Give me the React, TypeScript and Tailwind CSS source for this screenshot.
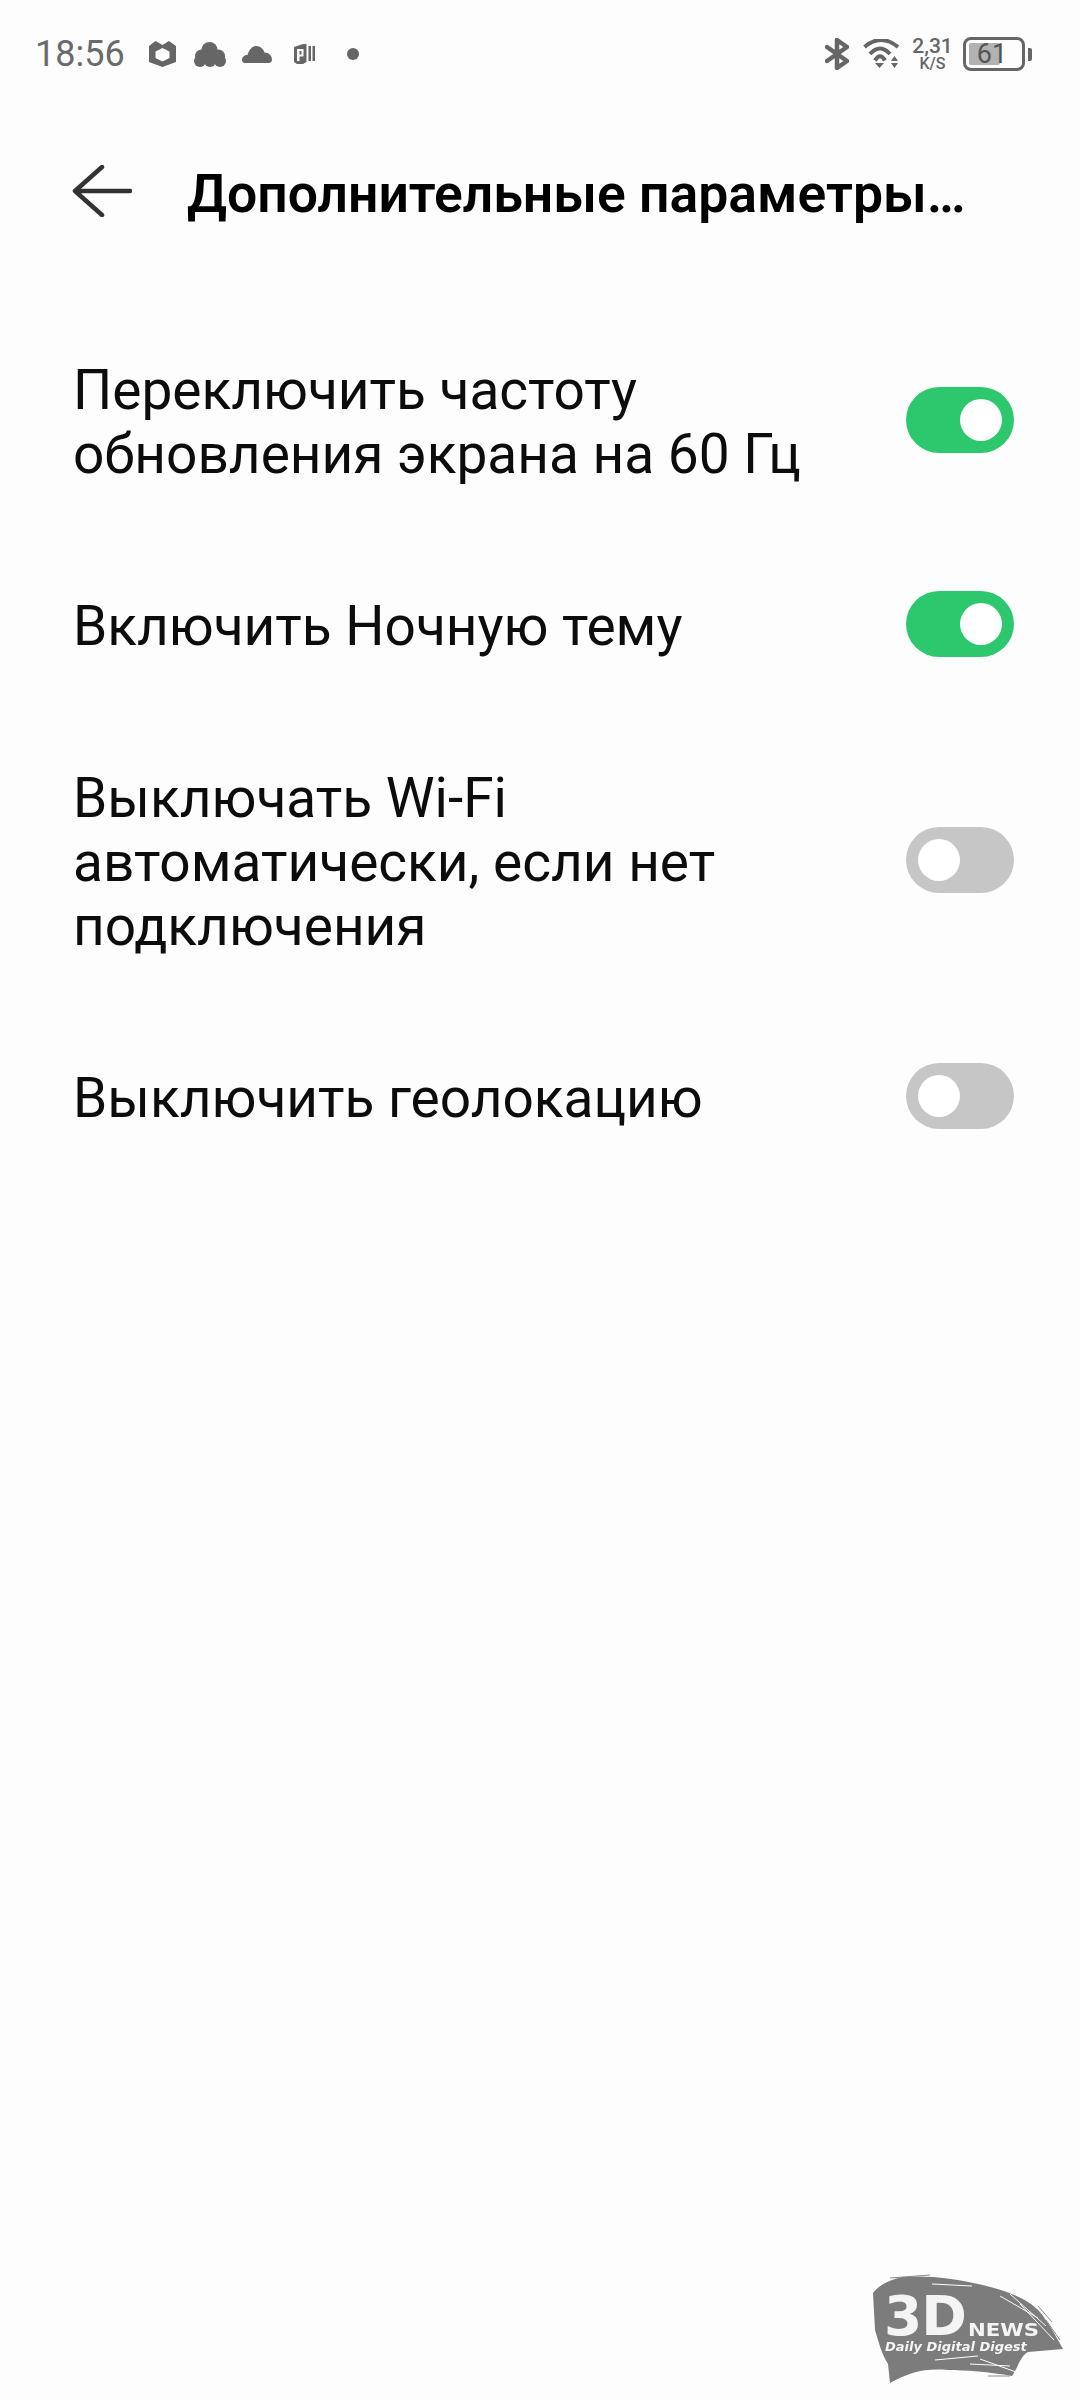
const font = { fontFamily: "Roboto, sans-serif" }

function Toggle({ on }: { on: boolean }) {
    return (
        <div className={`flex h-[66px] w-[108px] shrink-0 items-center rounded-full px-[12px] ${on ? "justify-end bg-[#2dc76d]" : "justify-start bg-[#c6c6c6]"}`}>
            <div className="h-[42px] w-[42px] rounded-full bg-white" />
        </div>
    )
}

function Row({ lines, on }: { lines: string[]; on: boolean }) {
    return (
        <div className="flex items-center justify-between">
            <div className="mt-[2px] -mb-[2px] text-[55px] leading-[64px] text-[#0c0c0c]">
                {lines.map((line) => <div key={line} className="whitespace-nowrap">{line}</div>)}
            </div>
            <Toggle on={on} />
        </div>
    )
}

function LeftIcons() {
    return (
        <div className="ml-[24px] flex items-center">
            <svg width="27" height="26" viewBox="0 0 27 26" className="fill-[#666]">
                <path fillRule="evenodd" d="M6.500 0 L13.500 4 L20 0 L27 5 V21 L13.500 26 L0 21 V5 Z M13.500 7 L6.500 10.500 V17 L13.500 20.500 L20.500 17 V10.500 Z" />
            </svg>
            <svg width="32" height="25" viewBox="0 0 32 25" className="ml-[18px] fill-[#666]">
                <circle cx="15.500" cy="8" r="8" />
                <circle cx="7.500" cy="14" r="6.500" />
                <circle cx="24.500" cy="14" r="6.500" />
                <circle cx="6" cy="19" r="6" />
                <circle cx="16" cy="19" r="6" />
                <circle cx="26" cy="19" r="6" />
            </svg>
            <svg width="30" height="17" viewBox="0 0 30 17" className="ml-[16px] fill-[#666]">
                <path d="M14 0 C18.500 0 21.500 3 22.500 6.500 C27 6.500 30 10 30 13.500 C30 16 28.500 17 26.500 17 H3 C1 17 0 15.500 0 14 C0 11 2.500 9 5.500 9 C7 4 10 0 14 0 Z" />
            </svg>
            <svg width="21" height="20" viewBox="0 0 21 20" className="ml-[22px] fill-[#666]">
                <path fillRule="evenodd" d="M0 3 L9 0 H12.500 V18 L9 20 H3 L0 18 Z M3 5 V17 H5.500 V12.500 H9.500 V5 Z M5.500 7 H7.500 V10.500 H5.500 Z" />
                <rect x="14.500" y="2" width="2.500" height="15" />
                <rect x="18.500" y="2" width="2.500" height="15" />
            </svg>
            <div className="ml-[32px] h-[12px] w-[12px] rounded-full bg-[#666]" />
        </div>
    )
}

function RightIcons() {
    return (
        <div className="flex items-center">
            <svg width="24" height="32" viewBox="0 0 24 32" fill="none" stroke="#666" strokeWidth="4.500" strokeLinecap="round" strokeLinejoin="round">
                <path d="M2 9 L22 23 L12 30 V2 L22 9 L2 23" />
            </svg>
            <svg width="36" height="30" viewBox="0 0 36 30" className="ml-[14px]" fill="none" stroke="#666" strokeWidth="4">
                <path d="M1.500 8 Q18 -6 35 8" />
                <path d="M7 15 Q17 4 27 15" />
                <path d="M12 21.500 Q17 13 22 21.500" />
                <path d="M12 24 H21 L16.500 29 Z M31.500 17 L35 22 H28 Z M28 24 H35 L31.500 29 Z" fill="#666" stroke="none" />
            </svg>
            <div className="ml-[15px] flex w-[37px] flex-col items-center font-medium text-[#666]">
                <div className="text-[21px] leading-[20px]">2,31</div>
                <div className="text-[16px] leading-[16px]">K/S</div>
            </div>
            <div className="ml-[12px] relative h-[34px] w-[62px] rounded-[8px] border-[3px] border-[#666] p-[3px]">
                <div className="h-full w-[31px] rounded-[2px] bg-[#b2b2b2]" />
                <div className="absolute inset-0 flex items-center justify-center pr-[4px] text-[27px] leading-none text-[#555]">61</div>
            </div>
            <div className="ml-[3px] h-[13px] w-[4px] rounded-r-[2px] bg-[#666]" />
        </div>
    )
}

function Watermark() {
    return (
        <div className="absolute left-[860px] top-[2260px] h-[140px] w-[220px] text-[#f4f4f4] blur-[0.5px]">
            <svg width="220" height="140" viewBox="0 0 220 140" className="absolute inset-0 fill-[#7c7c7c]">
                <path d="M13 33 C20 24 30 20 42 17 C70 15 95 19 118 24 C140 29 165 36 180 52 C190 65 197 78 203 89 L168 92 C160 96 158 108 152 116 C130 112 105 110 88 110 C65 108 50 112 30 123 L28 104 C22 95 18 80 15 70 Z" />
                <g fill="none" stroke="#fdfdfd" strokeWidth="1">
                    <path d="M140 36 L178 58" />
                    <path d="M150 34 L186 66" />
                    <path d="M160 44 L194 80" />
                    <path d="M72 24 L112 26" />
                    <path d="M75 100 L118 96" />
                    <path d="M110 104 L150 106" />
                    <path d="M120 99 L156 112" />
                </g>
                <g fill="none" stroke="#8a8a8a" strokeWidth="1">
                    <path d="M30 18 L70 15" />
                    <path d="M178 46 L192 62" />
                    <path d="M186 60 L200 80" />
                    <path d="M150 116 L128 116" />
                </g>
            </svg>
            <div className="absolute left-[24px] top-[35px] text-[55px] font-bold leading-[42px] tracking-[-1px]" style={{ fontFamily: "'DejaVu Sans', sans-serif" }}>3D</div>
            <div className="absolute left-[108px] top-[63px] origin-left scale-x-[1.25] text-[17px] font-bold leading-[15px]" style={{ fontFamily: "'DejaVu Sans', sans-serif" }}>NEWS</div>
            <div className="absolute left-[25px] top-[80px] whitespace-nowrap text-[13px] font-bold italic leading-[13px]" style={{ fontFamily: "'DejaVu Sans', sans-serif" }}>Daily Digital Digest</div>
        </div>
    )
}

export default function App() {
    return (
        <div className="relative h-[2400px] w-[1080px] overflow-hidden bg-[#fdfdfd]" style={font}>
            <div className="flex h-[108px] items-center justify-between pl-[35px] pr-[48px]">
                <div className="flex items-center">
                    <span className="text-[36px] leading-none text-[#6a6a6a]">18:56</span>
                    <LeftIcons />
                </div>
                <RightIcons />
            </div>
            <div className="flex h-[166px] items-center pl-[72px]">
                <svg width="60" height="52" viewBox="0 0 60 52" fill="none" stroke="#333" strokeWidth="4.500" strokeLinecap="round" strokeLinejoin="round">
                    <path d="M58 26 H3 M30 2 L3 26 L30 50" />
                </svg>
                <div className="ml-[55px] mt-[6px] text-[53.500px] font-semibold leading-[64px] text-black">Дополнительные параметры…</div>
            </div>
            <div className="flex flex-col gap-[107px] pl-[73px] pr-[66px] pt-[82px]">
                <Row lines={["Переключить частоту", "обновления экрана на 60 Гц"]} on />
                <Row lines={["Включить Ночную тему"]} on />
                <Row lines={["Выключать Wi-Fi", "автоматически, если нет", "подключения"]} on={false} />
                <Row lines={["Выключить геолокацию"]} on={false} />
            </div>
            <Watermark />
        </div>
    )
}
